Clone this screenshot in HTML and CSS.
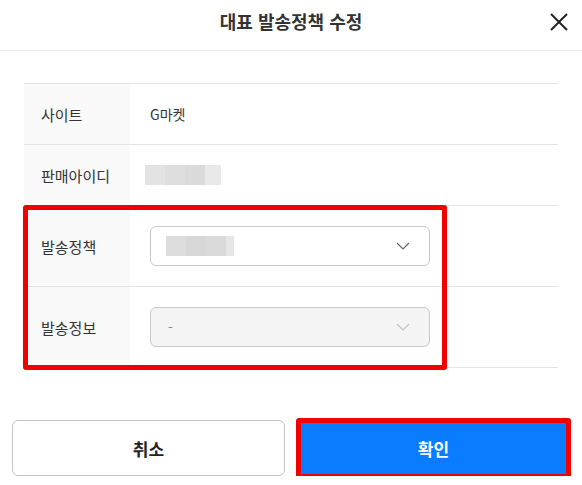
FILE: index.html
```html
<!DOCTYPE html>
<html lang="ko">
<head>
<meta charset="utf-8">
<link rel="stylesheet" href="styles.css">
</head>
<body>
<div class="modal">
  <div class="header">
    <h1 class="title">대표 발송정책 수정</h1>
    <button class="close" aria-label="닫기">
      <svg width="18" height="18" viewBox="0 0 18 18"><path d="M1 1L17 17M17 1L1 17" stroke="#222" stroke-width="2" fill="none"/></svg>
    </button>
  </div>
  <div class="body">
    <div class="table">
      <div class="row">
        <div class="label">사이트</div>
        <div class="value">G마켓</div>
      </div>
      <div class="row">
        <div class="label">판매아이디</div>
        <div class="value"><span class="blur blur-id"></span></div>
      </div>
      <div class="group">
        <div class="row tall">
          <div class="label">발송정책</div>
          <div class="value">
            <div class="select">
              <span class="blur blur-policy"></span>
              <svg class="chev" width="14" height="8" viewBox="0 0 14 8"><path d="M1 1L7 7L13 1" stroke="#666" stroke-width="1.2" fill="none"/></svg>
            </div>
          </div>
        </div>
        <div class="row tall">
          <div class="label">발송정보</div>
          <div class="value">
            <div class="select disabled">
              <span class="dash">-</span>
              <svg class="chev" width="14" height="8" viewBox="0 0 14 8"><path d="M1 1L7 7L13 1" stroke="#c4c4c4" stroke-width="1.2" fill="none"/></svg>
            </div>
          </div>
        </div>
        <div class="highlight group-hl"></div>
      </div>
    </div>
  </div>
  <div class="footer">
    <button class="btn cancel">취소</button>
    <div class="confirm-wrap">
      <button class="btn confirm">확인</button>
      <div class="highlight btn-hl"></div>
    </div>
  </div>
</div>
</body>
</html>
```

FILE: styles.css
```css
* { box-sizing: border-box; }
html, body { margin: 0; padding: 0; background: #fff; }
body {
  font-family: "Noto Sans CJK KR", "Noto Sans", "Liberation Sans", sans-serif;
  color: #333;
}
.modal { width: 582px; }
.header {
  height: 51px;
  border-bottom: 1px solid #e9e9e9;
  display: flex;
  align-items: center;
  justify-content: center;
  position: relative;
}
.title {
  margin: 0;
  font-size: 18px;
  font-weight: 700;
  color: #333;
  line-height: 1;
  margin-top: -8px;
}
.close {
  position: absolute;
  right: 14px;
  top: 13px;
  width: 18px;
  height: 18px;
  padding: 0;
  border: 0;
  background: none;
  display: block;
}
.close svg { display: block; }
.body { padding: 32px 24px 0; }
.table { border-top: 1px solid #e3e3e3; }
.group { position: relative; }
.row {
  display: flex;
  height: 61px;
  border-bottom: 1px solid #e3e3e3;
}
.row.tall { height: 81px; }
.label {
  width: 106px;
  background: #f9f9f9;
  padding-left: 17px;
  display: flex;
  align-items: center;
  font-size: 15px;
  color: #333;
}
.value {
  flex: 1;
  padding-left: 20px;
  display: flex;
  align-items: center;
  font-size: 14px;
  color: #333;
}
.blur { display: block; height: 20px; }
.blur-id {
  width: 76px;
  margin-left: -5px;
  background: linear-gradient(to right, #e3e3e3 0 20px, #dedede 20px 40px, #dadada 40px 60px, #e9e9e9 60px 76px);
}
.blur-policy {
  width: 68px;
  background: linear-gradient(to right, #dddddd 0 20px, #d7d7d7 20px 40px, #dadada 40px 60px, #e6e6e6 60px 68px);
}
.select {
  width: 280px;
  height: 40px;
  border: 1px solid #c9c9c9;
  border-radius: 6px;
  display: flex;
  align-items: center;
  justify-content: space-between;
  padding: 0 19px 0 15px;
  background: #fff;
}
.select.disabled { background: #f4f4f4; }
.dash { color: #888; font-size: 14px; margin-left: 2px; }
.chev { display: block; }
.highlight {
  position: absolute;
  border: 5px solid #f20000;
  border-radius: 3px;
  pointer-events: none;
}
.group-hl { left: -1px; top: -1px; width: 424px; height: 165px; }
.footer {
  display: flex;
  gap: 12px;
  padding: 52px 12px 0;
}
.btn {
  width: 273px;
  height: 56px;
  border-radius: 6px;
  font-family: inherit;
  font-size: 17px;
  font-weight: 700;
  cursor: pointer;
}
.cancel {
  background: #fff;
  border: 1px solid #c4c4c4;
  color: #222;
}
.confirm-wrap { position: relative; }
.confirm {
  background: #0a7cff;
  border: 0;
  color: #fff;
  display: block;
}
.btn-hl { left: -1px; top: -2px; width: 275px; height: 61px; }
```
